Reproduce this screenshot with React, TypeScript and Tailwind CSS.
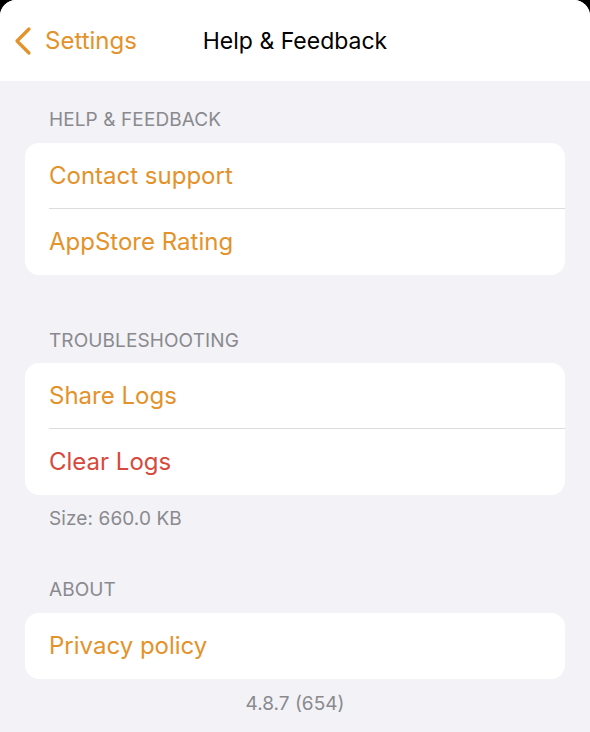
import React from "react";

const font = { fontFamily: "Inter, 'Noto Sans', sans-serif" };

function Label({ children }: { children: React.ReactNode }) {
  return (
    <div className="pl-[49px] text-[19px] leading-[24px] tracking-[0.1px] text-[#8a8a8e]">
      {children}
    </div>
  );
}

function Row({ children, red = false, divider = false }: { children: React.ReactNode; red?: boolean; divider?: boolean }) {
  return (
    <div className="relative flex h-[66px] items-center pl-[24px]">
      <span className={"text-[24px] leading-[30px] " + (red ? "text-[#d8493d]" : "text-[#e4922a]")}>{children}</span>
      {divider && <div className="absolute bottom-0 left-[24px] right-0 h-px bg-[#dcdce0]" />}
    </div>
  );
}

export default function App() {
  return (
    <div className="h-[732px] w-[590px] overflow-hidden bg-black" style={font}>
      <div className="h-full w-full overflow-hidden rounded-t-[16px] bg-[#f2f2f7]">
        <div className="relative flex h-[81px] items-center bg-white">
          <div className="flex items-center pl-[12px] pt-[1px]">
            <svg width="20" height="30" viewBox="0 0 20 30" className="mr-[13px]">
              <path d="M17 3 L5 15 L17 27" fill="none" stroke="#e4922a" strokeWidth="3.2" strokeLinecap="round" strokeLinejoin="round" />
            </svg>
            <span className="text-[24px] leading-[30px] text-[#e4922a]">Settings</span>
          </div>
          <div className="absolute inset-x-0 top-0 flex h-[81px] items-center justify-center pt-[1px]">
            <span className="text-[23px] leading-[30px] text-black">Help &amp; Feedback</span>
          </div>
        </div>

        <div className="pt-[27px]">
          <Label>HELP &amp; FEEDBACK</Label>
          <div className="mx-[25px] mt-[11px] overflow-hidden rounded-[14px] bg-white">
            <Row divider>Contact support</Row>
            <Row>AppStore Rating</Row>
          </div>

          <div className="mt-[54px]">
            <Label>TROUBLESHOOTING</Label>
          </div>
          <div className="mx-[25px] mt-[10px] overflow-hidden rounded-[14px] bg-white">
            <Row divider>Share Logs</Row>
            <Row red>Clear Logs</Row>
          </div>
          <div className="mt-[12px]">
            <Label>Size: 660.0 KB</Label>
          </div>

          <div className="mt-[47px]">
            <Label>ABOUT</Label>
          </div>
          <div className="mx-[25px] mt-[11px] overflow-hidden rounded-[14px] bg-white">
            <Row>Privacy policy</Row>
          </div>
          <div className="mt-[13px] text-center text-[19px] leading-[24px] text-[#8a8a8e]">4.8.7 (654)</div>
        </div>
      </div>
    </div>
  );
}
